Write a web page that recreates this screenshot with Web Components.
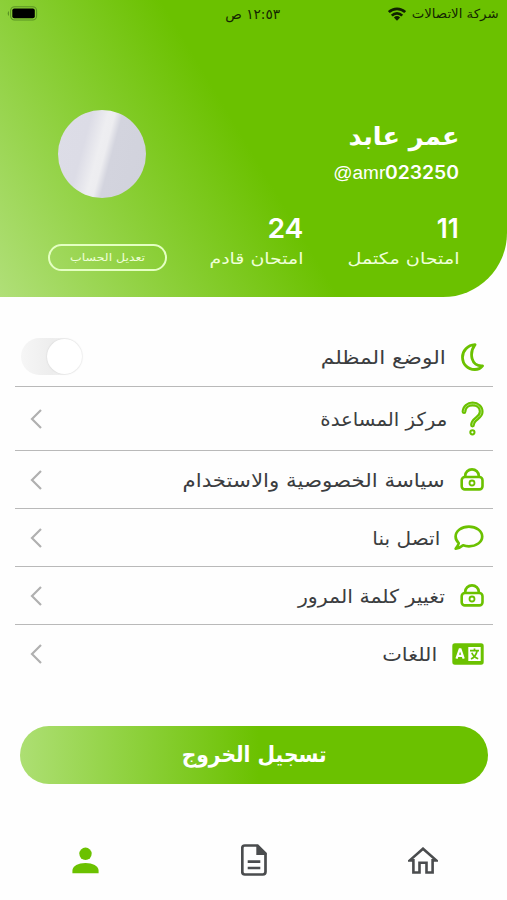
<!DOCTYPE html>
<html lang="ar" dir="rtl">
<head>
<meta charset="utf-8">
<title>الحساب</title>
<style>
html,body{margin:0;height:100%;background:#fefefe}
body{font-family:"DejaVu Sans",sans-serif;color:#3b3d40;overflow:hidden}
</style>
</head>
<body>
<account-screen></account-screen>
<script>
const define = (name, html, init) => {
  const tpl = document.createElement('template');
  tpl.innerHTML = html;
  customElements.define(name, class extends HTMLElement {
    constructor() {
      super();
      this.attachShadow({mode: 'open'}).append(tpl.content.cloneNode(true));
    }
    connectedCallback() { if (init) init.call(this, this.shadowRoot); }
  });
};

/* Text squeezed or stretched horizontally to a given width. */
define('fit-text', `<style>
:host{display:block;flex:none;white-space:nowrap;direction:rtl}
span{display:inline-block;transform-origin:right center}
</style><span></span>`, function (root) {
  const span = root.querySelector('span');
  span.textContent = this.getAttribute('text');
  if (this.hasAttribute('ltr')) span.dir = 'ltr';
  const w = +this.getAttribute('w');
  this.style.width = w + 'px';
  if (span.offsetWidth) span.style.transform = `scaleX(${w / span.getBoundingClientRect().width})`;
});

const ICONS = {
  moon: [23, 28, '<path d="M14 1.700C6.500 2.200 1.500 7.800 1.500 14.200c0 7 5.300 12.300 12.300 12.300 3.500 0 6-1.300 7.700-3.600-5.400.4-9.200-2.700-10.400-7.200C9.900 10.900 11.200 5.500 14 1.700Z" fill="none" stroke="#6bc100" stroke-width="2.800" stroke-linejoin="round"/>'],
  help: [23, 35, '<g fill="none" stroke-linecap="round" stroke-linejoin="round"><path d="M3 10.600C3.300 5.800 7 3 11.600 3c5.100 0 8.600 3.300 8.600 7.800 0 6.300-8.700 6.700-8.700 13.200" stroke="#6bc100" stroke-width="4.800"/><path d="M3 10.600C3.300 5.800 7 3 11.600 3c5.100 0 8.600 3.300 8.600 7.800 0 6.300-8.700 6.700-8.700 13.200" stroke="#a9e070" stroke-width="1"/><circle cx="11.400" cy="31.300" r="2.100" stroke="#6bc100" stroke-width="2"/></g>'],
  lock: [24, 23, '<g fill="none" stroke="#6bc100"><rect x="1.700" y="9" width="20.800" height="12.400" rx="3.200" stroke-width="2.600"/><path d="M5.200 9V7.900a6.800 6.500 0 0 1 13.600 0V9" stroke-width="2.700"/><circle cx="12" cy="15" r="2.500" stroke-width="1.800"/></g>'],
  chat: [30, 26, '<path d="M4.700 18.200C2.800 16.300 1.600 14 1.600 11.500c0-5.600 5.900-9.800 13.300-9.800s13.300 4.200 13.300 9.800-5.900 9.800-13.300 9.800c-2 0-4-.3-5.800-1-2.100 1.900-4.500 3-7.400 3.300 1.500-1.600 2.600-3.300 3-5.400Z" fill="none" stroke="#6bc100" stroke-width="2.700" stroke-linejoin="round"/>'],
  lang: [32, 22, '<rect x=".3" y=".3" width="31.400" height="21.400" rx="2.600" fill="#6bc100"/><path d="M16.300 4h12.400v14h-12.400z" fill="#fff"/><path d="m4.500 15.600 3.200-9.200h.8l3.200 9.200M5.800 12.900h4.600" fill="none" stroke="#fff" stroke-width="2.200"/><g fill="none" stroke="#6bc100" stroke-width="1.700"><path d="M18 7.700h9M22.500 5.600v2.100M25 8.200c-.8 3.700-3 6.300-6 7.900M19.800 9.800c1 2.600 3.200 4.900 6.400 6"/></g>'],
  person: [27, 27, '<circle cx="13.500" cy="6.800" r="6.200" fill="#6bc100"/><path d="M.4 26.200v-2.500c0-4.600 6-7.600 13.100-7.600s13.100 3 13.100 7.600v2.500Z" fill="#6bc100"/>'],
  doc: [26, 32, '<path d="M3.800 1.500h12.700l8 8v18.300a2.700 2.700 0 0 1-2.700 2.700h-18a2.500 2.500 0 0 1-2.500-2.500V4a2.500 2.500 0 0 1 2.500-2.500Z" fill="none" stroke="#4a4c4e" stroke-width="2.700"/><path d="M15.300 1v10h10V9L17 1Z" fill="#4a4c4e"/><path d="M6.700 17.600h12.600M6.700 24h12.600" stroke="#4a4c4e" stroke-width="2.700"/>'],
  home: [30, 27, '<path d="M1.800 13.400 15 1.700l13.200 11.700H24.600v12.100h-6.100v-9.800h-7v9.800H5.400V13.400Z" fill="none" stroke="#4a4c4e" stroke-width="2.600"/>'],
  chevron: [12, 20, '<path d="M11 1 2 10l9 9" fill="none" stroke="#b0b0b0" stroke-width="2.200"/>'],
  wifi: [18, 14, '<g fill="none" stroke="#102000" stroke-width="2.700"><path d="M.8 5.100a11.800 11.800 0 0 1 16.400 0"/><path d="M3.800 8.600a7.400 7.400 0 0 1 10.400 0"/></g><path d="M9 13.800 5.900 10.500a4.600 4.600 0 0 1 6.200 0Z" fill="#102000"/>'],
  battery: [31, 15, '<rect x="3.600" y=".8" width="26" height="13.200" rx="4" fill="none" stroke="#5b9424" stroke-width="1.100"/><rect x="5.300" y="2.600" width="22.500" height="9.600" rx="2" fill="#000"/><path d="M2 5C.2 6 .2 9 2 10Z" fill="#5b9424"/>']
};
define('app-icon', `<style>:host{display:block;flex:none}svg{display:block}</style>`, function (root) {
  const [w, h, body] = ICONS[this.getAttribute('name')];
  root.innerHTML += `<svg width="${w}" height="${h}" viewBox="0 0 ${w} ${h}">${body}</svg>`;
});

define('status-bar', `<style>
:host{display:grid;grid-template-columns:1fr auto 1fr;align-items:center;height:27px;padding:0 8px 0 7px;color:#142602;font-size:12.500px}
.net{display:flex;align-items:center;gap:6px}
app-icon[name=battery]{justify-self:end}
.clock{font-size:14px}
</style>
<div class="net"><fit-text w="87" text="شركة الاتصالات"></fit-text><app-icon name="wifi"></app-icon></div>
<fit-text class="clock" w="55" text="١٢:٥٣ ص"></fit-text>
<app-icon name="battery"></app-icon>`);

define('stat-item', `<style>
:host{display:block;color:#fff}
.n{font:600 27px/30px Inter,sans-serif}
.l{font-size:16px;line-height:24px;margin-top:3px;color:#efffd9}
</style><fit-text class="n"></fit-text><fit-text class="l"></fit-text>`, function (root) {
  const old = [...root.querySelectorAll('fit-text')];
  [['value', 'vw'], ['label', 'lw']].forEach(([t, w], i) => {
    const el = document.createElement('fit-text');
    el.className = old[i].className;
    el.setAttribute('text', this.getAttribute(t));
    el.setAttribute('w', this.getAttribute(w));
    old[i].replaceWith(el);
  });
});

define('profile-header', `<style>
:host{display:block;height:297px;box-sizing:border-box;border-bottom-right-radius:64px;color:#fff;
background:linear-gradient(59deg,#b0df78 0%,#6bc100 49.500%)}
.top{display:flex;justify-content:space-between;height:104px;padding:83px 48px 0 58px}
.id{padding-top:10px}
.name{font-weight:700;font-size:25px;line-height:34px}
.handle{display:flex;direction:ltr;align-items:center;height:22px;margin-top:8px;font:18px/22px "Liberation Sans",sans-serif}
.handle .d{font:600 18px/22px Inter,sans-serif}
.avatar{width:88px;height:88px;border-radius:50%;background:linear-gradient(105deg,#dddde7 0%,#dcdce6 31%,#eeeef1 46%,#ededf0 52%,#d3d4de 59%,#d1d2dc 100%)}
.bottom{display:flex;align-items:flex-start;padding-right:48px}
.second{margin-right:44px}
button{all:unset;box-sizing:border-box;display:flex;justify-content:center;align-items:center;width:119px;height:27px;
border:2px solid #e4ffc2;border-radius:14px;margin:30px 42px 0 0;padding-bottom:2px;font-size:10.500px;color:#efffd9}
</style>
<status-bar></status-bar>
<div class="top">
<div class="id"><fit-text class="name" w="111" text="عمر عابد"></fit-text>
<div class="handle"><fit-text ltr w="52" text="@amr"></fit-text><fit-text ltr class="d" w="74" text="023250"></fit-text></div></div>
<div class="avatar"></div></div>
<div class="bottom">
<stat-item value="11" vw="22" label="امتحان مكتمل" lw="112"></stat-item>
<stat-item class="second" value="24" vw="36" label="امتحان قادم" lw="94"></stat-item>
<button><fit-text w="75" text="تعديل الحساب"></fit-text></button></div>`);

define('toggle-switch', `<style>
:host{display:block;width:62px;height:37px;border-radius:19px;background:linear-gradient(90deg,#f6f6f6,#ededed 50%,#fafafa);direction:ltr}
i{display:block;width:35px;height:35px;border-radius:50%;background:#fff;margin-left:26px;position:relative;top:1px;box-shadow:0 0 2px #0002}
</style><i></i>`);

define('menu-row', `<style>
:host{display:flex;align-items:center;box-sizing:border-box;height:58px;border-bottom:1.500px solid #b9b9b9;font-size:19px}
:host([last]){border-bottom-color:transparent}
.end{margin-right:auto;padding-left:15px}
::slotted(toggle-switch){margin-left:-9px}
</style><div class="lead"></div><div class="end"><slot><app-icon name="chevron"></app-icon></slot></div>`, function (root) {
  const a = n => this.getAttribute(n);
  const lead = root.querySelector('.lead');
  lead.style.cssText = `display:flex;align-items:center;gap:${a('gap')}px;padding-right:${a('inset')}px`;
  lead.innerHTML = `<app-icon name="${a('icon')}"></app-icon><fit-text w="${a('w')}" text="${a('text')}"></fit-text>`;
});

define('logout-button', `<style>
:host{display:flex;align-items:center;justify-content:center;box-sizing:border-box;height:58px;padding-bottom:2px;border-radius:29px;color:#fff;font-weight:700;font-size:22px;
background:linear-gradient(90deg,#addf73 0%,#6bc100 51%)}
</style><fit-text w="145" text="تسجيل الخروج"></fit-text>`);

define('tab-bar', `<style>
:host{display:grid;grid-template-columns:repeat(3,1fr);justify-items:center;align-items:center;height:80px}
app-icon[name=person]{padding-left:2px}
app-icon[name=doc]{padding-left:1px}
</style><app-icon name="home"></app-icon><app-icon name="doc"></app-icon><app-icon name="person"></app-icon>`);

define('account-screen', `<style>
:host{display:block;width:507px;height:900px;background:#fefefe;overflow:hidden}
.menu{padding:30px 14px 0 15px}
.r1{height:60px}.r2{height:64px}
logout-button{margin:43px 19px 0 20px}
tab-bar{margin-top:36px}
</style>
<profile-header></profile-header>
<div class="menu">
<menu-row class="r1" icon="moon" inset="9" gap="15" w="125" text="الوضع المظلم"><toggle-switch></toggle-switch></menu-row>
<menu-row class="r2" icon="help" inset="9" gap="14" w="127" text="مركز المساعدة"></menu-row>
<menu-row icon="lock" inset="9" gap="15" w="262" text="سياسة الخصوصية والاستخدام"></menu-row>
<menu-row icon="chat" inset="9" gap="14" w="68" text="اتصل بنا"></menu-row>
<menu-row icon="lock" inset="9" gap="15" w="147" text="تغيير كلمة المرور"></menu-row>
<menu-row last icon="lang" inset="9" gap="15" w="55" text="اللغات"></menu-row>
</div>
<logout-button></logout-button>
<tab-bar></tab-bar>`);
</script>
</body>
</html>
